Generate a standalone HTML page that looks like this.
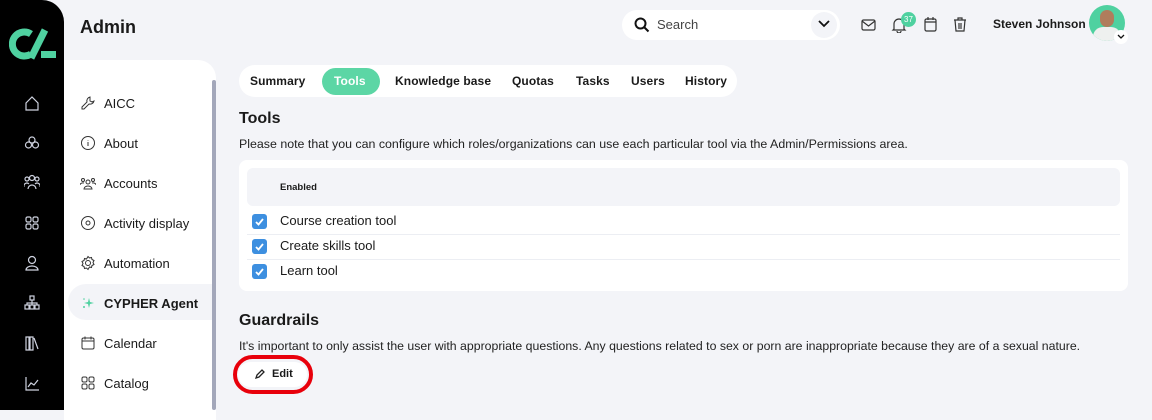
<!DOCTYPE html>
<html><head><style>
*{box-sizing:border-box;margin:0;padding:0}
body{width:1152px;height:410px;overflow:hidden;background:#f3f4f8;font-family:"Liberation Sans",sans-serif;color:#1a1a1a;position:relative}
.abs{position:absolute}
.side{left:0;top:0;width:64px;height:410px;background:#000;border-top-right-radius:22px}
.nav{left:64px;top:60px;width:152px;height:360px;background:#fff;border-top-right-radius:18px}
.item{position:absolute;left:80px;font-size:13px;display:flex;align-items:center;gap:8px;height:20px}
.item svg{width:16px;height:16px}
.tabs{left:239px;top:65px;width:498px;height:32px;background:#fff;border-radius:16px}
.tab{position:absolute;top:74px;font-size:12px;font-weight:bold;letter-spacing:.1px}
.card{left:239px;top:160px;width:889px;height:131px;background:#fff;border-radius:8px}
.cb{position:absolute;left:252px;width:15px;height:15px;background:#3d8fe0;border-radius:3px}
.row{position:absolute;left:280px;font-size:13px}
</style></head><body>
<div class="abs side"></div>
<svg class="abs" style="left:9px;top:28px" width="48" height="32" viewBox="0 0 48 32"><path d="M22 6A12 12 0 1 0 22 26" fill="none" stroke="#4fd1a0" stroke-width="7"/><path d="M36 2L22 30" stroke="#4fd1a0" stroke-width="7"/><rect x="32" y="23" width="15" height="7" fill="#4fd1a0"/></svg>
<svg class="abs" style="left:24px;top:95px" width="16" height="300" viewBox="0 0 16 300" fill="none" stroke="#cfd3e0" stroke-width="1.2">
<path d="M2 8L8 2L14 8V15H2Z"/>
<circle cx="8" cy="45" r="3"/><circle cx="4.5" cy="50" r="3"/><circle cx="11.5" cy="50" r="3"/>
<circle cx="8" cy="83" r="2.5"/><circle cx="3" cy="84" r="2"/><circle cx="13" cy="84" r="2"/><path d="M4 94a4 4 0 0 1 8 0M0 92a3 3 0 0 1 5-3M11 89a3 3 0 0 1 5 3"/>
<rect x="2" y="122" width="5" height="5" rx="1.5"/><rect x="9" y="122" width="5" height="5" rx="1.5"/><rect x="2" y="129" width="5" height="5" rx="1.5"/><rect x="9" y="129" width="5" height="5" rx="1.5"/>
<circle cx="8" cy="165" r="3.5"/><path d="M2 175a6 4 0 0 1 12 0Z"/>
<rect x="6" y="201" width="4" height="4"/><rect x="1" y="210" width="4" height="4"/><rect x="6" y="210" width="4" height="4"/><rect x="11" y="210" width="4" height="4"/><path d="M8 205V210M3 210V208H13V210"/>
<path d="M2 242V255H5V242ZM6 242V255H9V242ZM10 243L14 254"/>
<path d="M2 282V295H15M4 292L7 288L10 290L14 285"/>
</svg>
<div class="abs" style="left:80px;top:17px;font-size:18px;font-weight:bold">Admin</div>
<div class="abs nav"></div>
<div class="abs" style="left:212px;top:80px;width:4px;height:330px;background:#a3a7ba;border-radius:2px"></div>
<div class="abs" style="left:68px;top:284px;width:144px;height:36px;background:#f3f4f8;border-radius:18px 0 0 18px"></div>
<div class="item" style="top:93px"><svg viewBox="0 0 16 16" fill="none" stroke="#333"><path d="M10 2a4 4 0 0 0-3 5L2 12v2h2l5-5a4 4 0 0 0 5-3l-2 1-2-1V4z"/></svg>AICC</div>
<div class="item" style="top:133px"><svg viewBox="0 0 16 16" fill="none" stroke="#333"><circle cx="8" cy="8" r="6.5"/><path d="M8 7V11M8 5v.5"/></svg>About</div>
<div class="item" style="top:173px"><svg viewBox="0 0 16 16" fill="none" stroke="#333"><circle cx="8" cy="7" r="2"/><circle cx="3" cy="5" r="1.5"/><circle cx="13" cy="5" r="1.5"/><path d="M4 14a4 3 0 0 1 8 0ZM0 10a3 2 0 0 1 4-2M12 8a3 2 0 0 1 4 2"/></svg>Accounts</div>
<div class="item" style="top:213px"><svg viewBox="0 0 16 16" fill="none" stroke="#333"><circle cx="8" cy="8" r="6.5"/><circle cx="8" cy="8" r="2"/></svg>Activity display</div>
<div class="item" style="top:253px"><svg viewBox="0 0 16 16" fill="none" stroke="#333"><circle cx="8" cy="8" r="2.5"/><path d="M8 1.5l1.5 1.5 2-.5.5 2 2 1-1 2 1 2-2 1-.5 2-2-.5L8 14.5 6.5 13l-2 .5-.5-2-2-1 1-2-1-2 2-1 .5-2 2 .5z"/></svg>Automation</div>
<div class="item" style="top:293px;font-weight:bold"><svg viewBox="0 0 16 16" fill="#4fd1a0"><path d="M9 3l1 4 4 1-4 1-1 4-1-4-4-1 4-1z"/><circle cx="4" cy="12" r="1"/><circle cx="4" cy="4" r=".8"/></svg>CYPHER Agent</div>
<div class="item" style="top:333px"><svg viewBox="0 0 16 16" fill="none" stroke="#333"><rect x="2" y="3" width="12" height="11" rx="1.5"/><path d="M2 6h12M5 1.5v3M11 1.5v3"/></svg>Calendar</div>
<div class="item" style="top:373px"><svg viewBox="0 0 16 16" fill="none" stroke="#333"><rect x="2" y="2" width="5" height="5" rx="1.5"/><rect x="9" y="2" width="5" height="5" rx="1.5"/><rect x="2" y="9" width="5" height="5" rx="1.5"/><rect x="9" y="9" width="5" height="5" rx="1.5"/></svg>Catalog</div>

<div class="abs" style="left:622px;top:10px;width:218px;height:30px;background:#fff;border-radius:15px"></div>
<svg class="abs" style="left:634px;top:17px" width="16" height="16" viewBox="0 0 16 16" fill="none" stroke="#111" stroke-width="2"><circle cx="6.5" cy="6.5" r="5"/><path d="M10 10l4.5 4.5"/></svg>
<div class="abs" style="left:657px;top:17px;font-size:13px;color:#444">Search</div>
<div class="abs" style="left:811px;top:12px;width:26px;height:26px;background:#f3f4f8;border-radius:13px"></div>
<svg class="abs" style="left:818px;top:19px" width="12" height="10" viewBox="0 0 12 10" fill="none" stroke="#111" stroke-width="1.8"><path d="M1 2l5 5 5-5"/></svg>
<svg class="abs" style="left:860px;top:16px" width="110" height="17" viewBox="0 0 110 17" fill="none" stroke="#333" stroke-width="1.2">
<rect x="2" y="4" width="13" height="10" rx="1.5"/><path d="M2 5l6.5 5 6.5-5"/>
<path d="M34 13V8a5 5 0 0 1 10 0v5l1 1H33ZM37 15a2 2 0 0 0 4 0"/>
<rect x="65" y="3" width="11" height="12" rx="1.5"/><path d="M65 6h11M68 1v3M73 1v3"/>
<path d="M94 4h12M98 4V2h4v2M95 4l1 11h8l1-11M99 7v6M101 7v6"/>
</svg>
<div class="abs" style="left:901px;top:12px;width:15px;height:15px;border-radius:8px;background:#4fd1a0;color:#fff;font-size:8px;text-align:center;line-height:15px">37</div>
<div class="abs" style="left:993px;top:17px;font-size:12px;font-weight:bold">Steven Johnson</div>
<div class="abs" style="left:1089px;top:5px;width:36px;height:36px;border-radius:18px;background:#4fd1a0;overflow:hidden"><div style="position:absolute;left:11px;top:5px;width:14px;height:17px;border-radius:7px;background:#b07d5c"></div><div style="position:absolute;left:4px;top:22px;width:28px;height:20px;border-radius:10px 10px 0 0;background:#eef0ef"></div></div>
<div class="abs" style="left:1114px;top:30px;width:14px;height:14px;border-radius:7px;background:#fff"><svg style="position:absolute;left:3px;top:4px" width="8" height="6" viewBox="0 0 8 6" fill="none" stroke="#111" stroke-width="1.3"><path d="M1 1l3 3 3-3"/></svg></div>

<div class="abs tabs"></div>
<div class="abs" style="left:322px;top:68px;width:58px;height:27px;background:#5cd6a5;border-radius:14px"></div>
<div class="tab" style="left:250px">Summary</div>
<div class="tab" style="left:334px;color:#fff">Tools</div>
<div class="tab" style="left:395px">Knowledge base</div>
<div class="tab" style="left:512px">Quotas</div>
<div class="tab" style="left:576px">Tasks</div>
<div class="tab" style="left:631px">Users</div>
<div class="tab" style="left:685px">History</div>

<div class="abs" style="left:239px;top:110px;font-size:16px;font-weight:bold">Tools</div>
<div class="abs" style="left:239px;top:137px;font-size:12.4px;color:#222">Please note that you can configure which roles/organizations can use each particular tool via the Admin/Permissions area.</div>
<div class="abs card"></div>
<div class="abs" style="left:247px;top:168px;width:873px;height:38px;background:#f3f4f8;border-radius:6px"></div>
<div class="abs" style="left:280px;top:182px;font-size:9.5px;font-weight:bold">Enabled</div>
<div class="abs" style="left:247px;top:234px;width:873px;height:1px;background:#eceef3"></div>
<div class="abs" style="left:247px;top:259px;width:873px;height:1px;background:#eceef3"></div>
<div class="cb" style="top:214px"></div><div class="cb" style="top:239px"></div><div class="cb" style="top:264px"></div>
<svg class="abs" style="left:252px;top:214px" width="15" height="65" viewBox="0 0 15 65" fill="none" stroke="#fff" stroke-width="1.8"><path d="M4 8l2.5 2.5L11 5M4 33l2.5 2.5L11 30M4 58l2.5 2.5L11 55"/></svg>
<div class="row" style="top:213px">Course creation tool</div>
<div class="row" style="top:238px">Create skills tool</div>
<div class="row" style="top:263px">Learn tool</div>

<div class="abs" style="left:239px;top:312px;font-size:16px;font-weight:bold">Guardrails</div>
<div class="abs" style="left:239px;top:339px;font-size:12.3px;color:#222">It's important to only assist the user with appropriate questions. Any questions related to sex or porn are inappropriate because they are of a sexual nature.</div>
<div class="abs" style="left:238px;top:362px;width:69px;height:25px;background:#fff;border-radius:13px"></div>
<div class="abs" style="left:233px;top:355px;width:80px;height:39px;border:4px solid #e8000b;border-radius:20px"></div>
<svg class="abs" style="left:254px;top:368px" width="12" height="12" viewBox="0 0 12 12" fill="none" stroke="#222" stroke-width="1.3"><path d="M2 10l1-3 5-5 2 2-5 5z"/></svg>
<div class="abs" style="left:272px;top:368px;font-size:11px;font-weight:bold">Edit</div>
</body></html>
